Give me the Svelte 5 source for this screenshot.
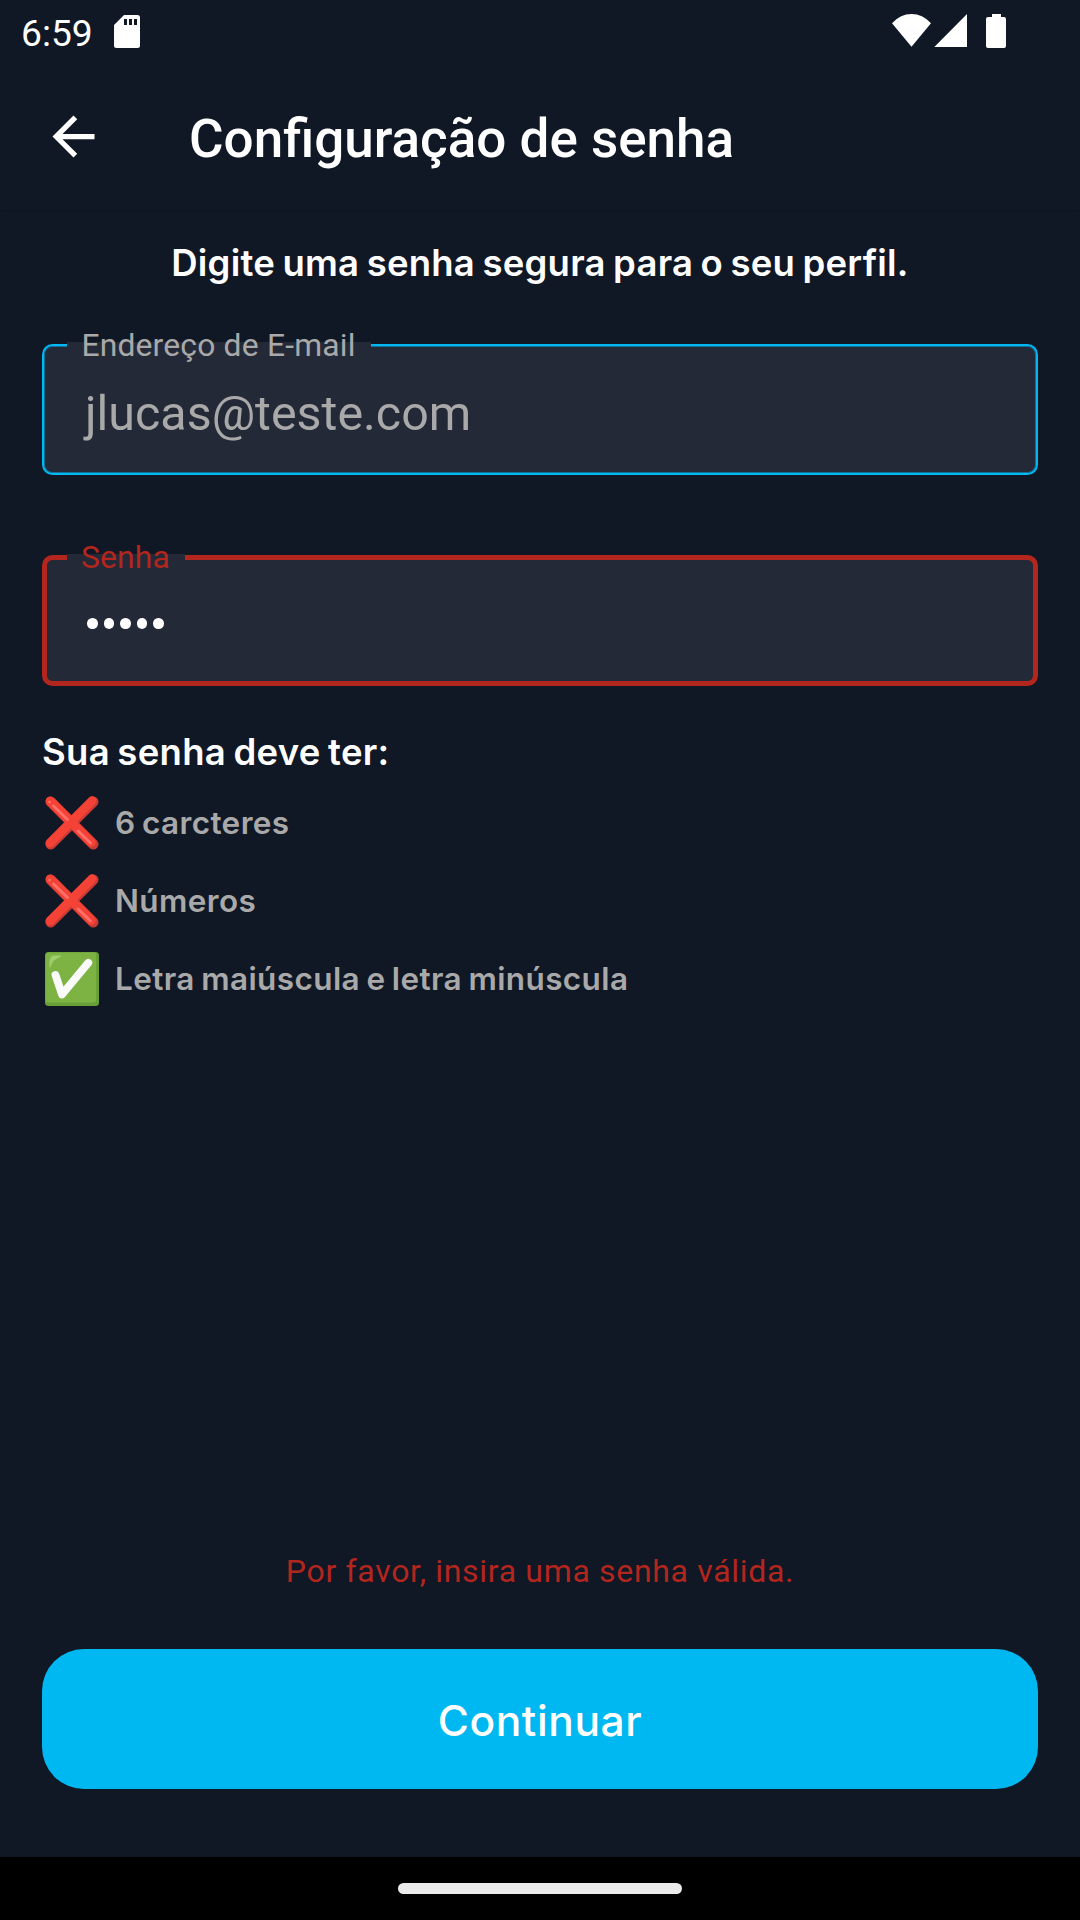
<script>
  const email = 'jlucas@teste.com';
  const passwordLength = 5;
  const requirements = [
    { id: 'length', text: '6 carcteres', met: false },
    { id: 'numbers', text: 'Números', met: false },
    { id: 'case', text: 'Letra maiúscula e letra minúscula', met: true }
  ];
</script>

<div class="screen">
  <div class="status">
    <span class="clock">6:59</span>
    <svg class="sd" viewBox="0 0 26 33">
      <path fill="#fff" fill-rule="evenodd" d="M10 0H23.5Q26 0 26 2.500V30.500Q26 33 23.500 33H2.500Q0 33 0 30.500V10ZM10 4V10H13V4ZM15 4V10H18V4ZM20 4V10H23V4Z" />
    </svg>
    <svg class="system" viewBox="0 0 116 34">
      <path fill="#fff" d="M0 9.200Q8.500 0 19.500 0T39 9.200L19.500 32.700ZM42.300 33L75 0V33Z" />
      <path fill="#fff" d="M100 0h9v3h3q2 0 2 2v27q0 2-2 2H96q-2 0-2-2V5q0-2 2-2h4z" />
    </svg>
  </div>

  <header class="appbar">
    <svg class="back" viewBox="0 0 24 24">
      <path fill="#fff" d="M20 11H7.830l5.590-5.590L12 4l-8 8 8 8 1.410-1.410L7.830 13H20v-2z" />
    </svg>
    <h1>Configuração de senha</h1>
  </header>

  <main>
    <h2 class="intro">Digite uma senha segura para o seu perfil.</h2>

    <div class="field email">
      <div class="label"><span>Endereço de E-mail</span></div>
      <span class="value">{email}</span>
    </div>

    <div class="field password">
      <div class="label"><span>Senha</span></div>
      <div class="dots">
        {#each Array(passwordLength) as _}
          <i></i>
        {/each}
      </div>
    </div>

    <h2 class="rules-title">Sua senha deve ter:</h2>
    <ul>
      {#each requirements as item (item.id)}
        <li class={item.id}>
          {#if item.met}
            <svg viewBox="0 0 54 54">
              <rect width="54" height="54" rx="3.500" fill="#689f38" />
              <rect x="0.700" y="0.500" width="50.500" height="50" rx="3" fill="#7cb342" />
              <path d="M4.500 15Q3.500 3.500 9 3.500H16Q17 4 15 5Q7 8 6 14Q5 17 4.500 15Z" fill="#aed581" opacity=".75" />
              <path d="M10.500 23L17 42.500L43.300 10.800" fill="none" stroke="#fafafa" stroke-width="7.800" stroke-linecap="round" stroke-linejoin="round" />
            </svg>
          {:else}
            <svg viewBox="0 0 54 54">
              <path d="M5.700 5.700L48.300 48.300M48.300 5.700L5.700 48.300" stroke="#c73a35" stroke-width="10.500" stroke-linecap="round" />
              <path d="M5.200 5L46.300 46.500M47 4.800L5 47" stroke="#f44336" stroke-width="9" stroke-linecap="round" />
              <path d="M8.500 10L22.500 23.500M33 35L45.500 47" stroke="#ff7068" stroke-width="3" stroke-linecap="round" />
              <circle cx="4.500" cy="6" r="1.300" fill="#ff7068" />
            </svg>
          {/if}
          <span>{item.text}</span>
        </li>
      {/each}
    </ul>

    <p class="error">Por favor, insira uma senha válida.</p>
    <button>Continuar</button>
  </main>

  <nav><div class="pill"></div></nav>
</div>

<style>
  :global(body) {
    margin: 0;
    background: #101725;
  }
  .screen {
    width: 1080px;
    height: 1920px;
    display: flex;
    flex-direction: column;
    overflow: hidden;
    background: #101725;
    color: #fff;
    font-family: Roboto, sans-serif;
  }
  h1, h2, p, ul, li {
    margin: 0;
    padding: 0;
    list-style: none;
  }
  svg {
    display: block;
    flex: none;
  }
  .status {
    height: 63px;
    display: flex;
    align-items: flex-start;
    padding: 0 72px 0 21px;
    flex: none;
  }
  .clock {
    width: 93px;
    font-size: 37.200px;
    line-height: 66px;
    white-space: nowrap;
  }
  .sd {
    width: 26px;
    height: 33px;
    margin-top: 15px;
  }
  .system {
    width: 116px;
    height: 34px;
    margin: 14px 0 0 auto;
  }
  .appbar {
    height: 147px;
    flex: none;
    display: flex;
    align-items: center;
    padding-left: 42px;
    box-shadow: 0 1px 2px rgba(0, 0, 0, 0.1);
  }
  .back {
    width: 63px;
    height: 63px;
  }
  h1 {
    margin-left: 84px;
    padding-top: 5px;
    font-size: 53px;
    line-height: 62px;
    font-weight: 500;
    white-space: nowrap;
  }
  main {
    flex: 1;
    display: flex;
    flex-direction: column;
    padding: 28px 42px 68px;
  }
  h2 {
    font-family: Inter, sans-serif;
    font-size: 36.500px;
    line-height: 50px;
    font-weight: 600;
    white-space: nowrap;
  }
  .intro {
    text-align: center;
    letter-spacing: 0.220px;
    word-spacing: -2px;
  }
  .field {
    position: relative;
    box-sizing: border-box;
    height: 131px;
    flex: none;
    display: flex;
    align-items: center;
    border-radius: 10.500px;
    background: #242938;
  }
  .email {
    margin-top: 56px;
    border: 2px solid #00b8f1;
    box-shadow: inset 0 0 0 1px rgba(0, 184, 241, 0.5);
    padding-left: 41px;
  }
  .password {
    margin-top: 80px;
    border: 5px solid #b3261e;
    padding-left: 40px;
  }
  /* The label sits over the border and hides it behind the notch. */
  .label {
    position: absolute;
    display: flex;
    align-items: center;
    justify-content: center;
    height: 8px;
    background: #242938;
    font-size: 31.800px;
    letter-spacing: 0.200px;
    white-space: nowrap;
  }
  .label span {
    margin-top: -2px;
  }
  .email .label {
    left: 22.500px;
    top: -4px;
    width: 304px;
    color: #a9a9a9;
  }
  .password .label {
    left: 19.500px;
    top: -6.500px;
    width: 118px;
    color: #b3261e;
  }
  .value {
    font-size: 48.400px;
    line-height: 60px;
    color: #a9a9a9;
    padding-top: 9px;
  }
  .dots {
    display: flex;
    gap: 6px;
    padding-top: 6px;
  }
  .dots i {
    width: 10.500px;
    height: 10.500px;
    border-radius: 50%;
    background: #fff;
  }
  .rules-title {
    margin-top: 41px;
    letter-spacing: 0.280px;
    word-spacing: -2px;
  }
  ul {
    margin-top: 7px;
  }
  li {
    height: 78px;
    display: flex;
    align-items: center;
    gap: 16px;
    padding-left: 3px;
    font-family: Inter, sans-serif;
    font-size: 31.500px;
    line-height: 44px;
    font-weight: 600;
    letter-spacing: 0.400px;
    word-spacing: -2px;
    color: #a9a9a9;
  }
  li svg {
    width: 54px;
    height: 54px;
  }
  .error {
    margin-top: auto;
    text-align: center;
    font-size: 32px;
    line-height: 40px;
    letter-spacing: 0.680px;
    color: #b3261e;
  }
  button {
    margin: 58px 0 0;
    padding: 3px 0 0;
    height: 140px;
    flex: none;
    border: 0;
    border-radius: 42px;
    background: #00b8f1;
    color: #fff;
    font: 500 42.500px/50px Inter, sans-serif;
    letter-spacing: 0.600px;
  }
  nav {
    height: 63px;
    flex: none;
    display: flex;
    align-items: center;
    justify-content: center;
    background: #000;
  }
  .pill {
    width: 284px;
    height: 11px;
    border-radius: 6px;
    background: #ebebeb;
  }
</style>
